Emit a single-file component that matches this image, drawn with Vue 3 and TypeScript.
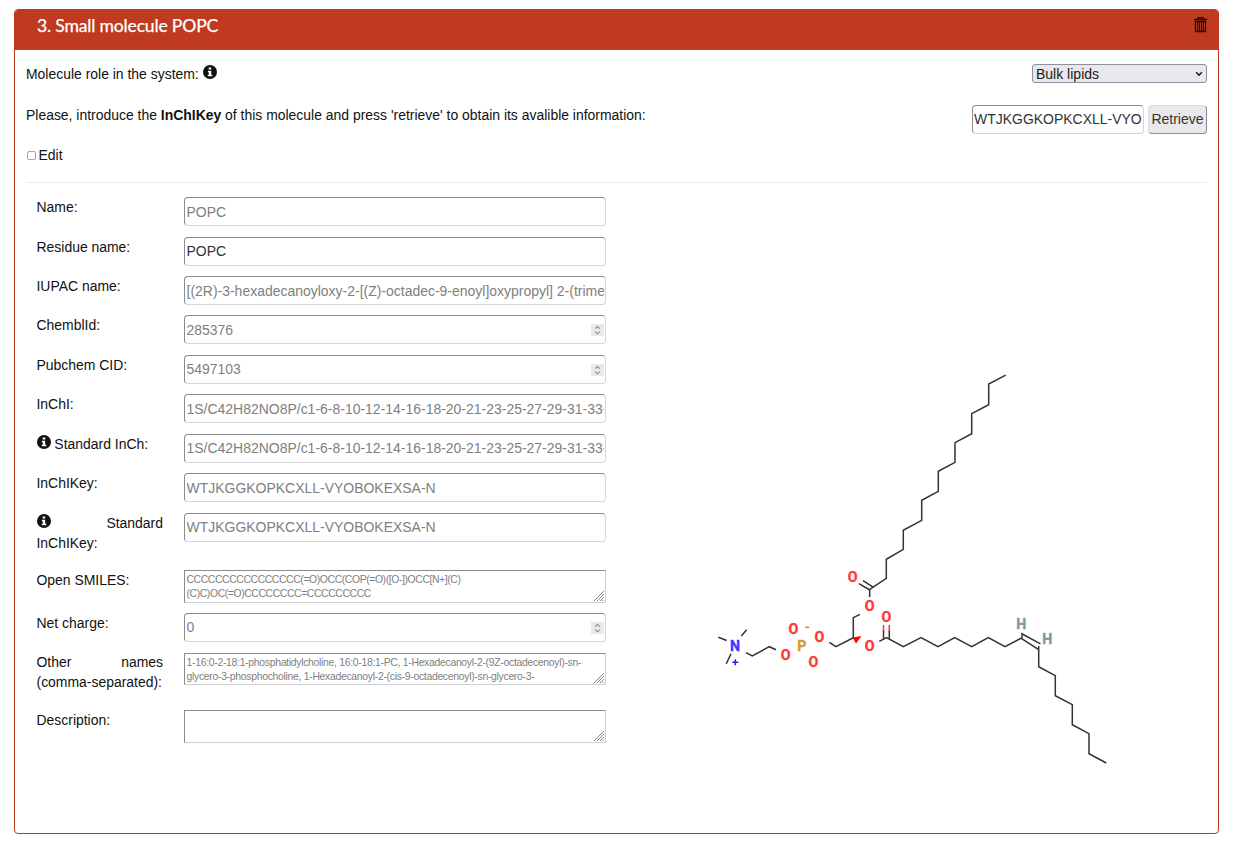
<script setup lang="ts">
interface Field {
  id: string
  label: string
  value: string
  kind: 'text' | 'number' | 'area'
  info?: boolean
  editable?: boolean
  size?: string
}

const fields: Field[] = [
  { id: 'name', label: 'Name:', value: 'POPC', kind: 'text' },
  { id: 'residue', label: 'Residue name:', value: 'POPC', kind: 'text', editable: true },
  { id: 'iupac', label: 'IUPAC name:', value: '[(2R)-3-hexadecanoyloxy-2-[(Z)-octadec-9-enoyl]oxypropyl] 2-(trimethylazaniumyl)ethyl phosphate', kind: 'text' },
  { id: 'chembl', label: 'ChemblId:', value: '285376', kind: 'number' },
  { id: 'pubchem', label: 'Pubchem CID:', value: '5497103', kind: 'number' },
  { id: 'inchi', label: 'InChI:', value: '1S/C42H82NO8P/c1-6-8-10-12-14-16-18-20-21-23-25-27-29-31-33-35-42(45)51-40', kind: 'text' },
  { id: 'std-inchi', label: 'Standard InCh:', value: '1S/C42H82NO8P/c1-6-8-10-12-14-16-18-20-21-23-25-27-29-31-33-35-42(45)51-40', kind: 'text', info: true },
  { id: 'inchikey', label: 'InChIKey:', value: 'WTJKGGKOPKCXLL-VYOBOKEXSA-N', kind: 'text' },
  { id: 'std-inchikey', label: 'Standard InChIKey:', value: 'WTJKGGKOPKCXLL-VYOBOKEXSA-N', kind: 'text', info: true, size: 'tall' },
  { id: 'smiles', label: 'Open SMILES:', value: 'CCCCCCCCCCCCCCCC(=O)OCC(COP(=O)([O-])OCC[N+](C)\n(C)C)OC(=O)CCCCCCCC=CCCCCCCCC', kind: 'area', size: 'medium' },
  { id: 'charge', label: 'Net charge:', value: '0', kind: 'number', size: 'charge' },
  { id: 'others', label: 'Other names (comma-separated):', value: '1-16:0-2-18:1-phosphatidylcholine, 16:0-18:1-PC, 1-Hexadecanoyl-2-(9Z-octadecenoyl)-sn-\nglycero-3-phosphocholine, 1-Hexadecanoyl-2-(cis-9-octadecenoyl)-sn-glycero-3-', kind: 'area', size: 'names' },
  { id: 'description', label: 'Description:', value: '', kind: 'area', editable: true },
]

const atoms = [
  { s: 'O', x: 852.7, y: 577.3 },
  { s: 'O', x: 869.7, y: 605.7 },
  { s: 'O', x: 886.3, y: 616.7 },
  { s: 'O', x: 869.7, y: 645.7 },
  { s: 'O', x: 819.3, y: 636.7 },
  { s: 'O', x: 793.3, y: 629 },
  { s: 'O', x: 813.3, y: 662.3 },
  { s: 'O', x: 785.7, y: 654.7 },
  { s: 'P', x: 801.9, y: 645.7 },
  { s: 'N', x: 735, y: 645.7 },
  { s: 'H', x: 1021.3, y: 624.3 },
  { s: 'H', x: 1047.3, y: 639.3 },
]
</script>

<template>
  <section class="card">
    <header class="head">
      <h1>3. Small molecule POPC</h1>
      <svg class="trash" width="13" height="16" viewBox="0 0 13 16" fill="none" stroke="#1a0f0c">
        <path d="M0 2.5h13" stroke-width="1.3" />
        <path d="M4 2.4V.7h5v1.7" stroke-width="1.3" />
        <path d="M1.5 4.5h10v10h-10z" stroke-width="1.3" />
        <path d="M3.7 5v9.5M5.6 5v9.5M7.5 5v9.5M9.4 5v9.5" stroke-width="1" />
      </svg>
    </header>
    <div class="body">
      <div class="line role">
        <span>Molecule role in the system:
          <svg class="info" viewBox="0 0 14 14"><circle cx="7" cy="7" r="7" /><path d="M5.7 2.4h2.5v2H5.7zM4.9 5.7h3.3v4.1H9.3v1.5H4.8V9.8h1V7.2h-.9z" /></svg>
        </span>
        <div class="picker">
          <select><option>Bulk lipids</option></select>
          <svg class="chev" viewBox="0 0 8 6"><path d="M1.2 1.2 4 4.2 6.8 1.2" /></svg>
        </div>
      </div>
      <div class="line ask">
        <span>Please, introduce the <b>InChIKey</b> of this molecule and press 'retrieve' to obtain its avalible information:</span>
        <div class="lookup">
          <input class="box" value="WTJKGGKOPKCXLL-VYOBOKEXSA-N">
          <button type="button">Retrieve</button>
        </div>
      </div>
      <label class="edit"><input type="checkbox">Edit</label>
      <div class="split">
        <form class="form">
          <div v-for="f in fields" :key="f.id" class="row" :class="f.size">
            <label :for="f.id"><svg v-if="f.info" class="info" viewBox="0 0 14 14"><circle cx="7" cy="7" r="7" /><path d="M5.7 2.4h2.5v2H5.7zM4.9 5.7h3.3v4.1H9.3v1.5H4.8V9.8h1V7.2h-.9z" /></svg>{{ f.info ? ' ' : '' }}{{ f.label }}</label>
            <div class="control">
              <template v-if="f.kind === 'area'">
                <textarea :id="f.id" :value="f.value" :disabled="!f.editable" />
                <svg class="grip" viewBox="0 0 10 10"><path d="M0 10 10 0M3 10 10 3M6 10 10 6M8.6 10 10 8.6" /></svg>
              </template>
              <template v-else>
                <input :id="f.id" class="box" :value="f.value" :disabled="!f.editable">
                <span v-if="f.kind === 'number'" class="spin">
                  <svg viewBox="0 0 13 12"><path d="M4.2 4.6 6.5 2.4 8.8 4.6M4.2 7.6 6.5 9.8 8.8 7.6" /></svg>
                </span>
              </template>
            </div>
          </div>
        </form>
        <svg class="molecule" viewBox="700 360 420 420">
          <g class="bonds">
            <path d="M1005.7 375.2 988.7 384V404.7L971.7 413.7V433.7L955 442.7V462.3L938.3 471.3V491.3L921.7 500.3V520.3L903.3 530.3V549.3L886.3 559.3V578.3L869.7 589.3V597" />
            <path d="M863 580.7 873.5 587.3M859 583.7 869.7 590" />
            <path d="M860 614.3 853.3 617.7V637.7L836 646.7 829.3 642.3" />
            <path d="M776 649.7 769.3 646.7 752.3 656 746 652.7" />
            <path d="M726.7 640.5 718.3 637.3M741.3 636 746.7 629.7M731 653.7 726.3 663.7" />
            <path d="M879.3 641.3 886.5 637.7 903.3 646.7 921 637.7 938 646.7 954.7 637.7 971.7 646.7 988.3 637.7 1005 646.7 1022 637.7V632.7" />
            <path d="M883.5 630V639M889.3 630V639M1022.3 634 1040.5 643.8M1021.3 638.4 1038.7 649.6" />
            <path d="M1038.7 646V666.7L1055.3 675.7V695.7L1072.3 704.7V724.7L1089 733.7V753.7L1106.3 763" />
          </g>
          <path class="bonds red" d="M883.5 625V631M889.3 625V631" />
          <path d="M852.5 637.5 861.5 636 856 643.5z" fill="#f00" />
          <text v-for="(a, i) in atoms" :key="i" class="atom" :class="a.s" :x="a.x" :y="a.y + 5">{{ a.s }}</text>
          <path d="M805.2 627.3h4" stroke="#f44" stroke-width="1.2" />
          <path d="M732.3 662.3h6M735.3 659.3v6" stroke="#22f" stroke-width="1.6" />
        </svg>
      </div>
    </div>
  </section>
</template>

<style>
body { background: #fff; }
</style>

<style scoped>
* { box-sizing: border-box; }
.card { margin: 9px 16px 0 14px; height: 825px; border: 1px solid #bf3a1e; border-radius: 4px; font: 13.95px/20px "Liberation Sans", sans-serif; color: #111; overflow: hidden; }
.head { height: 40px; background: #bf3a1e; display: flex; justify-content: space-between; padding: 6px 11px 0 22px; }
.head h1 { margin: 0; font: 400 17.6px/20px Lato, sans-serif; letter-spacing: -.19px; color: #fff; -webkit-text-stroke: .25px #fff; }
.trash { display: block; margin-top: 1px; }
.body { padding: 0 11px; }
.line { display: flex; justify-content: space-between; }
.role { padding-top: 14px; height: 55px; }
.info { width: 14px; height: 14px; vertical-align: 0; overflow: visible; }
.info circle { fill: #111; }
.info path { fill: #fff; }
.picker { position: relative; width: 175px; height: 19px; }
.picker select { appearance: none; width: 100%; height: 19px; display: block; margin: 0; padding: 1px 3px 0; border: 1px solid #8f8f9d; border-radius: 3px; background: #e9e9ed; color: #1a1a1a; font: 14px/17px "Liberation Sans", sans-serif; }
.chev { position: absolute; right: 4px; top: 7px; width: 8px; height: 6px; fill: none; stroke: #111; stroke-width: 1.3; }
.ask { height: 40px; }
.lookup { display: flex; gap: 4px; height: 29px; }
.box { width: 100%; height: 29px; display: block; margin: 0; padding: 0 1.5px; background: #fff; color: #333; border: 1px solid; border-color: #8c8c8c #d6d6d6 #d6d6d6 #8c8c8c; border-radius: 4px; font: 13.98px/20px "Liberation Sans", sans-serif; }
.box:disabled, textarea:disabled { color: #808080; }
.lookup .box { width: 172px; padding: 0 1px 2px; }
button { width: 59px; height: 29px; padding: 0 0 2px; margin: 0; border: 1px solid; border-color: #dcdcdc #8c8c8c #8c8c8c #dcdcdc; border-radius: 4px; background: #e9e9ed; color: #333; font: 14px/20px "Liberation Sans", sans-serif; }
.edit { display: flex; align-items: center; height: 20px; gap: 3px; }
.edit input { appearance: none; width: 9px; height: 9px; margin: 1px 0 0 .5px; border: 1px solid #a5a5ad; border-radius: 2px; }
.split { margin-top: 17px; border-top: 1px solid #ebebeb; display: flex; padding-top: 14.25px; }
.form { width: 580px; padding-left: 10.5px; }
.row { display: flex; height: 39.41px; }
.row.tall { height: 57.3px; }
.row.medium { height: 43.2px; }
.row.charge { height: 39.7px; }
.row.names { height: 57px; line-height: 19.5px; }
.names label { padding-top: .5px; }
.row label { width: 126.5px; margin-right: 21px; text-align: justify; }
.control { position: relative; width: 422px; height: 33px; }
textarea { display: block; width: 100%; height: 33px; resize: none; margin: 0; padding: 2px 1.5px; overflow: hidden; white-space: pre; background: #fff; border: 1px solid; border-color: #8c8c8c #d0d0d0 #d0d0d0 #8c8c8c; border-radius: 0; font: 10.4px/14px "Liberation Sans", sans-serif; letter-spacing: -.39px; }
.names textarea { height: 32px; letter-spacing: -.29px; }
.grip { position: absolute; right: 2px; bottom: 2px; width: 10px; height: 10px; fill: none; stroke: #777; stroke-width: .9; }
.names .grip { bottom: 3px; }
.spin { position: absolute; right: 2px; top: 9px; width: 13px; height: 12px; background: #e9e9ed; }
.spin svg { display: block; width: 13px; height: 12px; fill: none; stroke: #888; stroke-width: 1.1; }
.molecule { width: 420px; height: 420px; margin: 162.75px 0 0 94px; }
.bonds { fill: none; stroke: #333; stroke-width: 1.5; }
.red { stroke: #f33; }
.atom { font: bold 14.2px Roboto, sans-serif; text-anchor: middle; fill: #ff3838; stroke: #ff3838; stroke-width: .35px; }
.P { fill: #d29a2c; stroke: #d29a2c; }
.N { fill: #3838ff; stroke: #3838ff; }
.H { fill: #7b9c9c; stroke: #7b9c9c; }
</style>
